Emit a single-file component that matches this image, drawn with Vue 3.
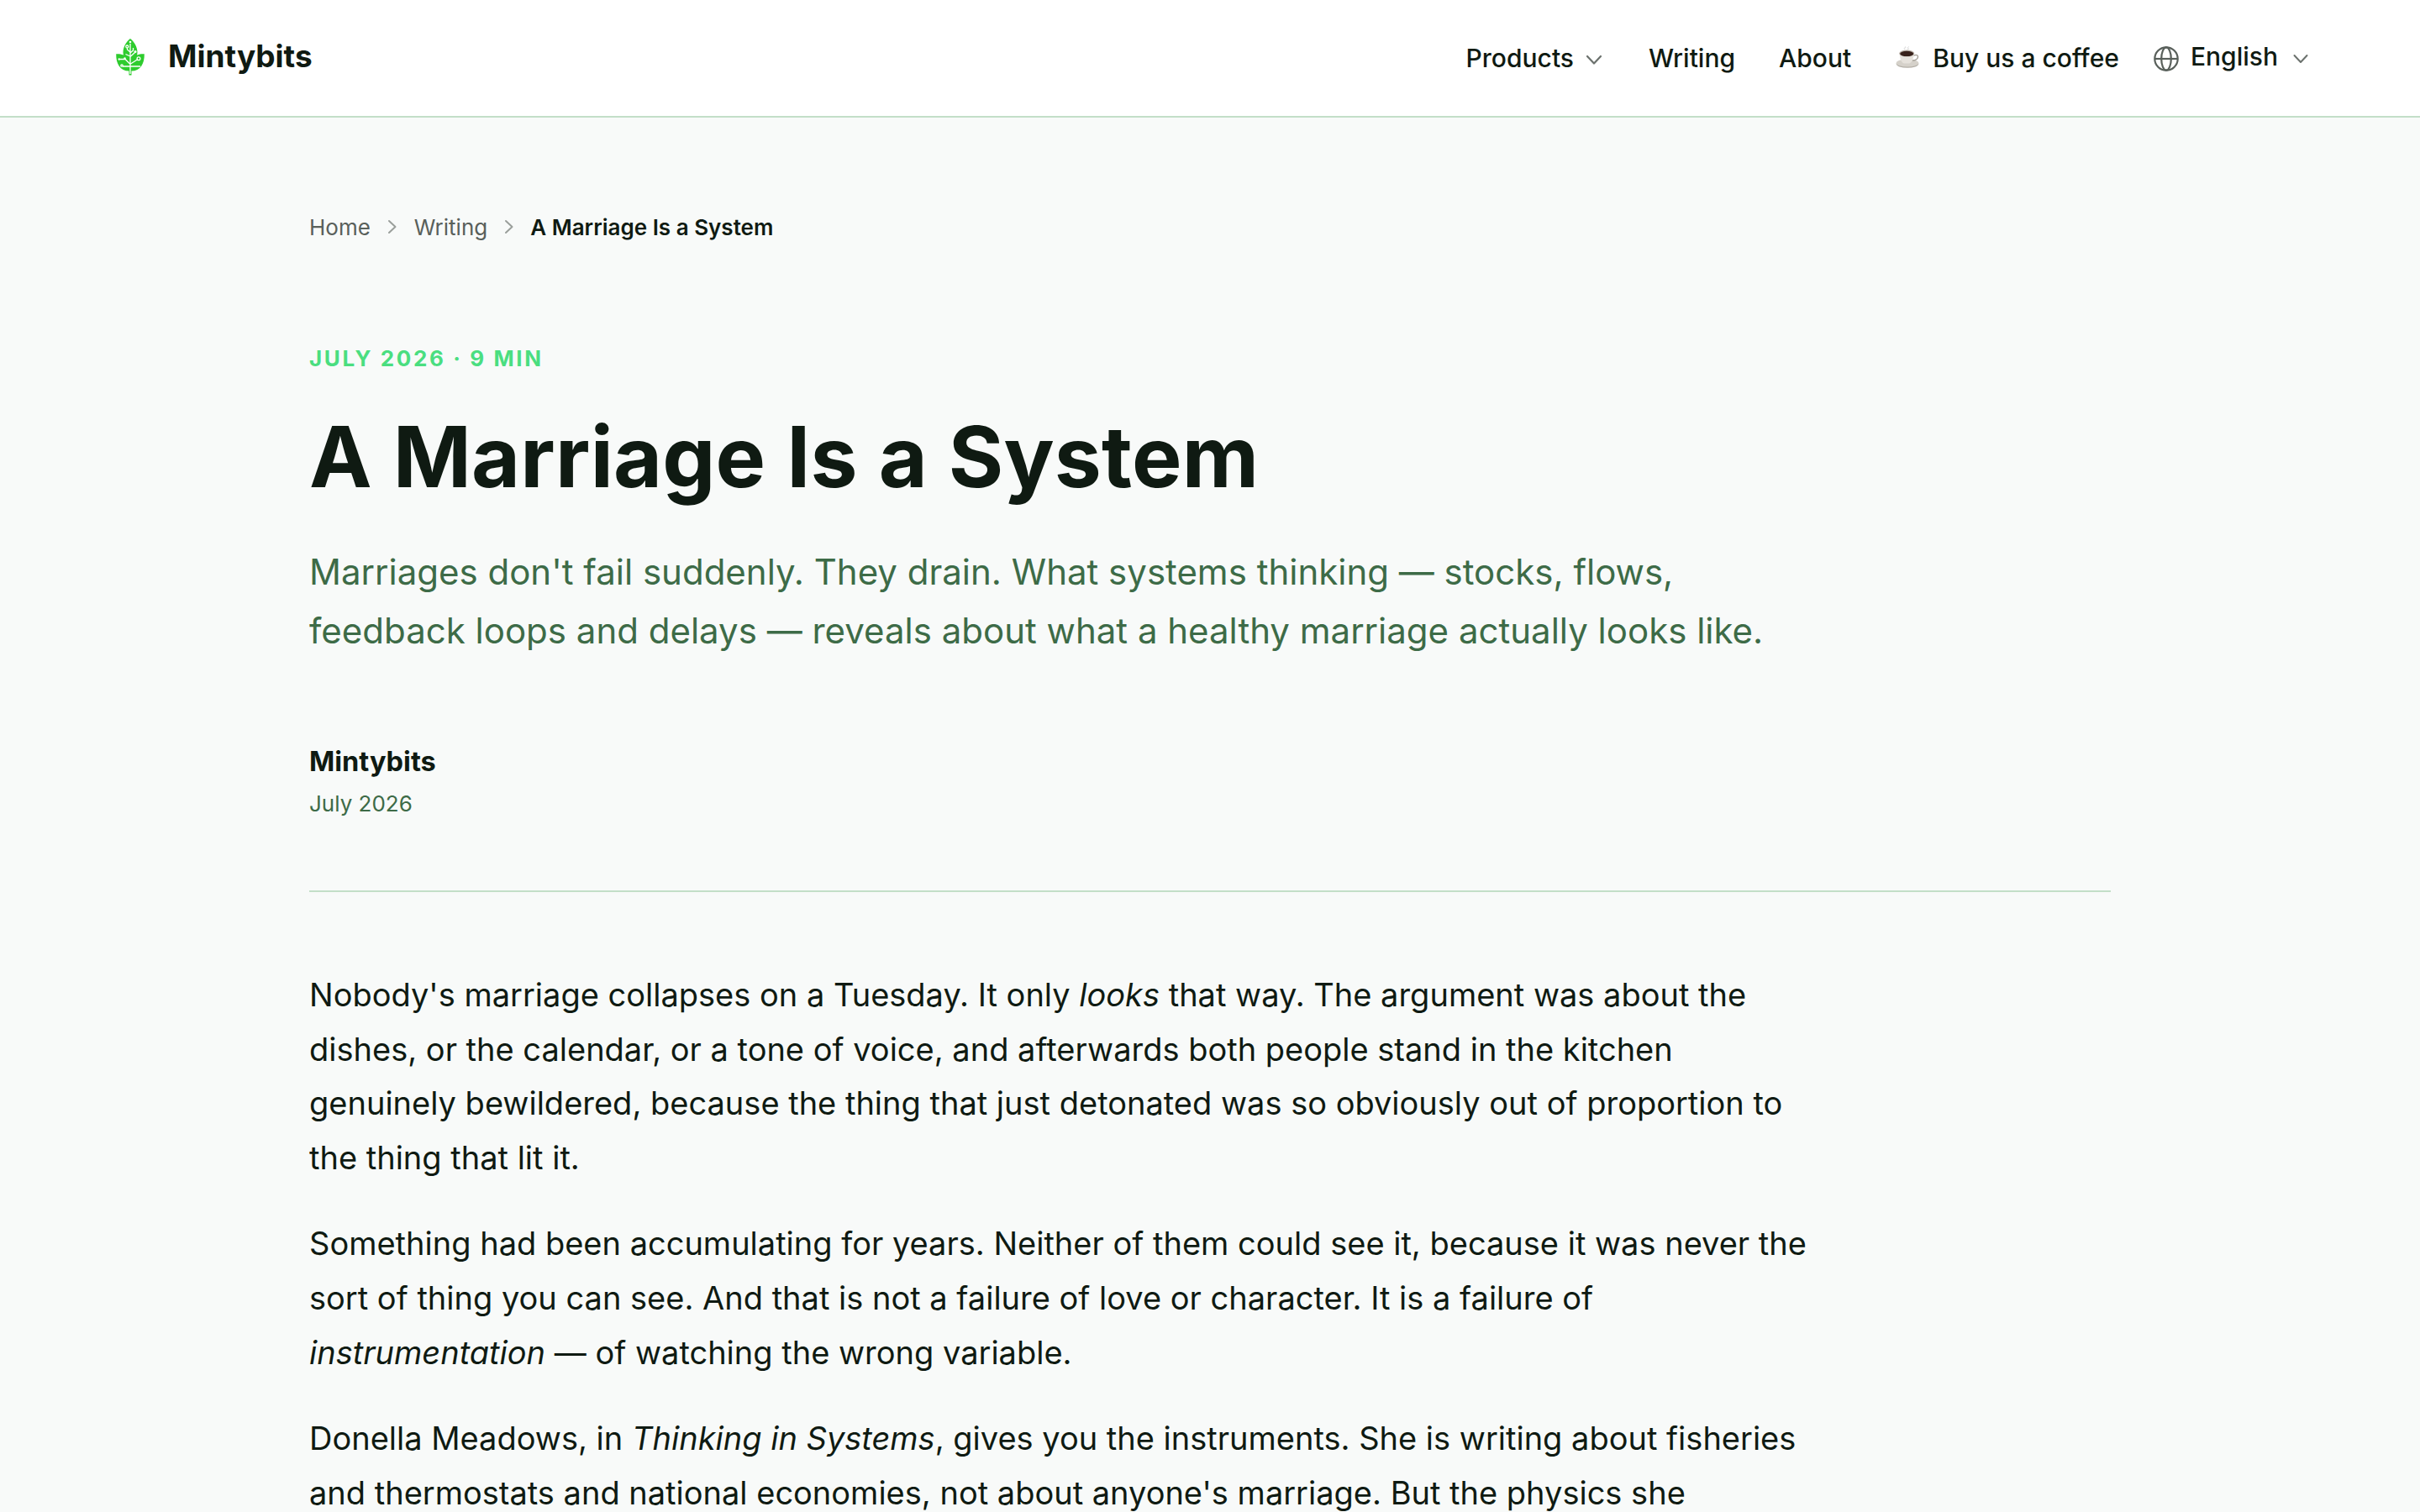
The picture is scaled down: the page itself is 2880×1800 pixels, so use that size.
<template>
  <div class="page">
    <header class="site-header">
      <a class="brand">
        <svg class="brand-logo" viewBox="0 0 36 46">
          <g fill="#2ecc2e">
            <path d="M18 1C13 5 9.500 11 9.500 17.500C9.500 19 10 20.500 10 20.500C7 19.200 4 19 1.200 19.200C1 31 6 39.500 16.500 39.500V44.500H19.500V39.500C30 39.500 35 31 34.800 19.200C32 19 29 19.200 26 20.500C26 20.500 26.500 19 26.500 17.500C26.500 11 23 5 18 1Z" />
          </g>
          <g fill="none" stroke="#fff" stroke-width="1.300">
            <path d="M18 7V43M18 17L14.500 14V12M18 22L12.500 19.500M18 18L21.500 15V12M18 22.500L23.500 17.500M17.500 31L12 25.500H6M17.500 34H9M18.500 31L27 25.500M18.500 34H30" />
            <circle cx="14.300" cy="10.500" r="1.500" />
            <circle cx="28" cy="24.800" r="1.900" />
            <circle cx="8" cy="33" r="1.200" />
          </g>
          <g fill="#fff">
            <circle cx="18" cy="5" r="1.300" />
            <circle cx="24" cy="16.500" r="1.500" />
            <circle cx="11.500" cy="24.500" r="1.200" />
            <circle cx="4.800" cy="25.500" r="1.200" />
          </g>
        </svg>
        <span class="brand-name">Mintybits</span>
      </a>

      <nav class="nav">
        <a class="nav-products">Products
          <svg class="chevron" viewBox="0 0 24 24"><path d="M4 8l8 8.500 8-8.500" /></svg>
        </a>
        <a class="nav-writing">Writing</a>
        <a class="nav-about">About</a>
        <a class="nav-coffee">
          <svg class="cup" viewBox="0 0 28 28">
            <ellipse cx="14" cy="22" rx="13.300" ry="4.800" fill="#b3aea6" />
            <ellipse cx="14" cy="21" rx="13.300" ry="4.600" fill="#d5d1ca" />
            <path d="M21 12c8-3 7 6-1 6" fill="none" stroke="#aaa59d" stroke-width="1.500" />
            <path d="M4.500 9.500C5 15 6.500 20.500 10 21.500h6C19.500 20.500 21.500 15 22 9.500z" fill="#e6e2dc" />
            <ellipse cx="13.200" cy="9.500" rx="9" ry="4" fill="#b9b0a7" />
            <ellipse cx="13.200" cy="9.900" rx="8" ry="3.200" fill="#38211b" />
            <path d="M10.500 4.500c-2-2 3-1 1-3M14 5c3-1-1-2 1.500-3.500" fill="none" stroke="#d4d4d4" stroke-width="1" />
          </svg>
          Buy us a coffee
        </a>
        <a class="nav-language">
          <svg class="globe" viewBox="0 0 30 30">
            <circle cx="15" cy="15" r="13.700" />
            <ellipse cx="15" cy="15" rx="5.800" ry="13.700" />
            <path d="M1.500 15h27" />
          </svg>
          <span>English</span>
          <svg class="chevron small" viewBox="0 0 24 24"><path d="M4.500 8l7.500 8 7.500-8" /></svg>
        </a>
      </nav>
    </header>

    <main class="article">
      <nav class="breadcrumb">
        <a>Home</a>
        <svg viewBox="0 0 12 20"><path d="M2 3l7.500 7-7.500 7" /></svg>
        <a>Writing</a>
        <svg viewBox="0 0 12 20"><path d="M2 3l7.500 7-7.500 7" /></svg>
        <span class="current">{{ title }}</span>
      </nav>

      <p class="eyebrow">July 2026 · 9 min</p>
      <h1 class="title">{{ title }}</h1>
      <p class="lead">
        Marriages don't fail suddenly. They drain. What systems thinking — stocks, flows,<br />
        feedback loops and delays — reveals about what a healthy marriage actually looks like.
      </p>

      <div class="byline">
        <span class="author">Mintybits</span>
        <span class="date">July 2026</span>
      </div>

      <div class="prose">
        <p>
          Nobody's marriage collapses on a Tuesday. It only <em>looks</em> that way. The argument was about the<br />
          dishes, or the calendar, or a tone of voice, and afterwards both people stand in the kitchen<br />
          genuinely bewildered, because the thing that just detonated was so obviously out of proportion to<br />
          the thing that lit it.
        </p>
        <p>
          Something had been accumulating for years. Neither of them could see it, because it was never the<br />
          sort of thing you can see. And that is not a failure of love or character. It is a failure of<br />
          <em>instrumentation</em> — of watching the wrong variable.
        </p>
        <p>
          Donella Meadows, in <em>Thinking in Systems</em>, gives you the instruments. She is writing about fisheries<br />
          and thermostats and national economies, not about anyone's marriage. But the physics she
        </p>
      </div>
    </main>
  </div>
</template>

<script setup>
const title = "A Marriage Is a System";
</script>

<style>
html,
body {
  background: #f8faf9;
}
</style>

<style scoped>
.page {
  height: 1800px;
  overflow: hidden;
  color: #0f1a12;
  background: #f8faf9;
  font-family: Inter, "Liberation Sans", sans-serif;
}
p,
h1 {
  margin: 0;
}
.site-header {
  display: flex;
  align-items: center;
  justify-content: space-between;
  box-sizing: border-box;
  height: 140px;
  padding: 0 130px 4px 137px;
  background: #fff;
  border-bottom: 2px solid #c3dfc8;
}
.brand,
.nav,
.nav a {
  display: flex;
  align-items: center;
}
.brand-logo {
  width: 36px;
  height: 46px;
  margin-top: 2px;
}
.brand-name {
  margin: -2px 0 0 27px;
  font-size: 37px;
  font-weight: 700;
}
.nav {
  font-size: 30px;
  font-weight: 500;
}
.nav .nav-products,
.nav .nav-writing,
.nav .nav-about,
.nav .nav-coffee {
  margin-right: 53px;
  padding-top: 4px;
}
.nav .nav-writing {
  margin-right: 52px;
}
.nav .nav-coffee {
  margin-right: 41px;
}
.chevron {
  width: 24px;
  height: 24px;
  margin: 3px 0 0 12px;
  fill: none;
  stroke: #6b716d;
  stroke-width: 2.2;
  stroke-linecap: round;
  stroke-linejoin: round;
}
.chevron.small {
  margin: 5px 0 0 15px;
  stroke-width: 2;
}
.cup {
  width: 28px;
  height: 28px;
  margin: -2px 16px 0 0;
}
.globe {
  width: 30px;
  height: 30px;
  margin: 6px 14px 0 0;
  fill: none;
  stroke: #59605b;
  stroke-width: 2.2;
}
.article {
  width: 2144px;
  margin: 0 auto;
  padding-top: 109px;
}
.breadcrumb {
  display: flex;
  align-items: center;
  height: 42px;
  font-size: 26px;
  color: #59605b;
}
.breadcrumb svg {
  width: 12px;
  height: 20px;
  margin: 0 20px;
  fill: none;
  stroke: #9a9f9b;
  stroke-width: 2;
  stroke-linecap: round;
  stroke-linejoin: round;
}
.breadcrumb .current {
  margin-left: -1px;
  font-weight: 600;
  color: #0f1a12;
}
.eyebrow {
  margin-top: 115px;
  font-size: 26px;
  line-height: 42px;
  font-weight: 700;
  letter-spacing: 2.6px;
  text-transform: uppercase;
  color: #4ade80;
}
.title {
  margin-top: 39px;
  font-size: 100px;
  line-height: 114px;
  font-weight: 700;
  letter-spacing: 0.2px;
  word-spacing: 1px;
}
.lead {
  margin-top: 45px;
  font-size: 42px;
  line-height: 70px;
  color: #3d6b47;
  white-space: nowrap;
}
.byline {
  display: flex;
  flex-direction: column;
  margin-top: 96px;
  padding-bottom: 82px;
  border-bottom: 2px solid #c3dfc8;
}
.author {
  font-size: 32.5px;
  line-height: 50px;
  font-weight: 700;
}
.date {
  margin-top: 4px;
  font-size: 26px;
  line-height: 42px;
  color: #3d6b47;
}
.prose {
  margin-top: 90px;
}
.prose p {
  margin-bottom: 38px;
  font-size: 38px;
  line-height: 64.6px;
  white-space: nowrap;
}
</style>
